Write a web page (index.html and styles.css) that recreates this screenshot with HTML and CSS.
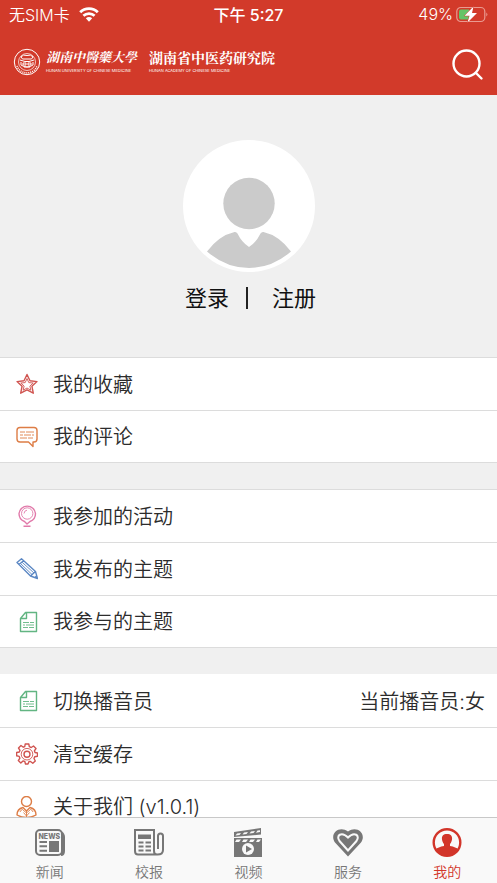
FILE: index.html
```html
<!DOCTYPE html>
<html lang="zh-CN">
<head>
<meta charset="utf-8">
<meta name="viewport" content="width=device-width, initial-scale=1">
<title>我的</title>
<link rel="stylesheet" href="styles.css">
</head>
<body>
<svg class="defs" aria-hidden="true">
  <symbol id="doc" viewBox="0 0 22 22">
    <path d="M9.500 1.500H20.500V20.500H4.500V7.500Z M10.500 1.500V7.500H4.500"/>
    <path class="thin" d="M7 11.500H13 M14 11.500H18 M7 14H9 M10 14H18 M7 16.500H12 M13 16.500H18"/>
  </symbol>
</svg>
<header class="header">
  <div class="status">
    <div class="carrier"><span>无SIM卡</span>
      <svg class="wifi" viewBox="0 0 20 15"><path d="M1.200 5.300C6 .4 14 .4 18.800 5.300" stroke-width="2.800"/><path d="M4.400 8.800C7.500 5.800 12.500 5.800 15.600 8.800" stroke-width="2.700"/><path class="dot" d="M6.800 11.300Q10 8.800 13.200 11.300L10 14.700Z"/></svg>
    </div>
    <time class="time">下午 5:27</time>
    <div class="power"><span>49%</span>
      <svg class="battery" viewBox="0 0 32 17"><rect class="shell" x=".8" y="1.500" width="28" height="14" rx="4"/><path class="charge" d="M5 3.500H13V13.500H5Q3 13.500 3 11.500V5.500Q3 3.500 5 3.500Z"/><path class="nub" d="M30.300 6.500Q32.500 8.500 30.300 10.500Z"/><path class="bolt" d="M17.500 .5L8.500 9.800H13.500L11.500 16.500L21 7H16Z"/></svg>
    </div>
  </div>
  <div class="brandbar">
    <div class="brand">
      <svg class="seal" viewBox="0 0 28 28"><circle cx="14" cy="14" r="12.700"/><circle cx="14" cy="14" r="8.500" stroke-width=".7"/><path d="M8 9Q10 6 14 7.500Q18 6 20 9L18.500 11H9.500Z M7 12L12 13.500H16L21 12 M8 14V17Q14 21 20 17V14 M10 15H13V17H10Z M15 15H18V17H15Z M11 19H17"/><path class="ring" d="M4 18A10.700 10.700 0 0 0 24 18"/></svg>
      <div class="name"><span class="script">湖南中醫藥大學</span><span class="latin">HUNAN UNIVERSITY OF CHINESE MEDICINE</span></div>
      <div class="name"><span class="serif">湖南省中医药研究院</span><span class="latin">HUNAN ACADEMY OF CHINESE MEDICINE</span></div>
    </div>
    <button class="search" type="button" aria-label="搜索"><svg viewBox="0 0 32 32"><circle cx="14.500" cy="14.500" r="13"/><path d="M24 24L29.500 29.500"/></svg></button>
  </div>
</header>
<main class="content">
  <section class="profile">
    <svg class="avatar" viewBox="0 0 132 132"><circle class="disc" cx="66" cy="66" r="66"/><circle cx="66" cy="63.500" r="25.700"/><path d="M24 111.500Q36 95.500 51.500 92Q53.500 91.700 54.500 93.500Q58.500 102 66 107Q73.500 102 77.500 93.500Q78.500 91.700 80.500 92Q96 95.500 108 111.500Q89 128 66 128Q43 128 24 111.500Z"/></svg>
    <div class="account"><a href="#login">登录</a><span class="bar"></span><a href="#register">注册</a></div>
  </section>
  <nav class="group">
    <a class="row" href="#favorites"><svg class="icon red" viewBox="0 0 22 22"><path d="M11 1.500L14 7.800L21 8.600L15.900 13.200L17.300 20.200L11 16.800L4.700 20.200L6.100 13.200L1 8.600L8 7.800Z"/><path class="thin" d="M11 5.500L12.800 9.600L17.200 10L13.900 13L14.800 17.200L11 15L7.200 17.200L8.100 13L4.800 10L9.200 9.600Z"/></svg><span>我的收藏</span></a>
    <a class="row" href="#comments"><svg class="icon orange" viewBox="0 0 22 22"><path d="M4 1.500H18Q21 1.500 21 4.500V13Q21 16 18 16H17V20.500L12.500 16H4Q1 16 1 13V4.500Q1 1.500 4 1.500Z"/><path class="thin" d="M4 6H9 M10 6H18 M4 9H7 M8 9H15 M16 9H18 M4 12H11 M12 12H17"/></svg><span>我的评论</span></a>
  </nav>
  <nav class="group">
    <a class="row" href="#activities"><svg class="icon pink" viewBox="0 0 22 22"><path d="M11 19L8.500 16.500Q3 14.500 3 8.500A8.300 8.300 0 0 1 19.500 8.500Q19.500 14.500 14 16.500Z M7.500 21.300H14.500"/><circle class="thin" cx="11.200" cy="8.500" r="5.700"/><path class="thin" d="M8 8.500Q8.300 5.500 11 5.200"/></svg><span>我参加的活动</span></a>
    <a class="row" href="#topics"><svg class="icon blue" viewBox="0 0 22 22"><path d="M1 4.500L5.500 .8L19.500 13.500L21.500 20.500L14.500 18Z M14.500 18L19.500 13.500 M3 6.500L7.500 2.800 M18.500 20L21 17.500"/><path class="thin" d="M4.500 5.500L16 16.500 M6 4.200L18 15"/></svg><span>我发布的主题</span></a>
    <a class="row" href="#joined"><svg class="icon green"><use href="#doc"/></svg><span>我参与的主题</span></a>
  </nav>
  <nav class="group plain">
    <a class="row" href="#voice"><svg class="icon green"><use href="#doc"/></svg><span>切换播音员</span><span class="value">当前播音员:女</span></a>
    <a class="row" href="#cache"><svg class="icon red" viewBox="0 0 22 22"><path d="M9.200 1H12.800L13.300 3.700L15.200 4.500L17.500 3L20 5.500L18.400 7.800L19 9.500L21.500 10V13.300L18.700 13.700L18 15.500L19.300 18L16.800 20.300L14.500 18.500H13L12 21H9.500L8.800 18.500L7 17.900L4.800 20L2.300 17.600L3.900 15.200L3.200 13.400L.6 12.800V9.500L3.300 9L4 7.300L2.500 5L5 2.500L7.300 4.200L8.800 3.500Z"/><circle class="thin" cx="11" cy="11.200" r="5.800"/><circle cx="11" cy="11.200" r="3"/></svg><span>清空缓存</span></a>
    <a class="row" href="#about"><svg class="icon orange" viewBox="0 0 22 22"><circle cx="10.500" cy="5.500" r="5"/><path d="M7 11.500Q1 13 1 19Q10.500 24 20 19Q20 13 14 11.500L10.500 15Z"/><path class="thin" d="M4 16Q4.500 14 6.500 13.500L10.500 17L14.500 13.500Q16.500 14 17 16 M10.500 15V21 M7.500 16.500L10.500 20L13.500 16.500"/></svg><span>关于我们 (v1.0.1)</span></a>
  </nav>
</main>
<nav class="tabs">
  <a class="tab" href="#news"><svg viewBox="0 0 32 32"><path class="fill" d="M27 4Q31 6 31 10V24Q31 29 27 29Z"/><rect class="paper" x="2" y="3" width="26" height="25" rx="4"/><text x="4.500" y="11.500">NEWS</text><path d="M5.500 15H13 M5.500 19.300H13 M5.500 23.700H13"/><path class="fill" d="M15 14H25V25H15Z"/></svg><span>新闻</span></a>
  <a class="tab" href="#paper"><svg viewBox="0 0 32 32"><path d="M2 3H21V24Q21 27.500 24 27.500H5Q2 27.500 2 24Z M21 27.500H24.500Q30 27.500 30 23V9Q30 6.500 27.500 6.500Q25 6.500 25 9V22"/><path class="fill" d="M5 7.500H18V12H5Z"/><path d="M5.500 15.500H10.500 M12.500 15.500H18 M5.500 19.500H10.500 M12.500 19.500H18 M5.500 23.500H10.500 M12.500 23.500H18"/></svg><span>校报</span></a>
  <a class="tab" href="#video"><svg viewBox="0 0 32 32"><path class="fill" d="M2 5L29 1V7.500L2 10Z M2 11H30V30H2Z"/><path class="cut" d="M5 6.500L9 5.900L7.500 8L3.500 8.500Z M12 5.500L16 4.900L14.500 7L10.500 7.500Z M19 4.500L23 3.900L21.500 6L17.500 6.500Z M25.500 3.500L28 3.200V5L24 5.700Z M4.500 12.500H9L7 15H3Z M11.500 12.500H16L14 15H10Z M18.500 12.500H23L21 15H17Z M25.500 12.500H29L27 15H24Z"/><circle class="cut" cx="16" cy="22" r="6"/><path class="fill" d="M14 18.500L20 22L14 25.500Z"/></svg><span>视频</span></a>
  <a class="tab" href="#service"><svg viewBox="0 0 32 32"><path class="fill" d="M16 29.500L3 15.500C-3 7 7-2 16 4.500C25-2 35 7 29 15.500Z"/><path class="heart" d="M16 23.500L7.500 14C3.500 8.500 9.500 4 16 10.500C22.500 4 28.500 8.500 24.500 14Z"/></svg><span>服务</span></a>
  <a class="tab active" href="#me"><svg viewBox="0 0 32 32"><circle cx="16" cy="15.500" r="13.300"/><path class="fill" d="M16 7C9 7 10.500 14 13 17V19Q7 20 4.500 22.500A14 14 0 0 0 27.500 22.500Q25 20 19 19V17C21.500 14 23 7 16 7Z"/></svg><span>我的</span></a>
</nav>
</body>
</html>
```

FILE: styles.css
```css
* { box-sizing: border-box; }
body {
  margin: 0;
  height: 100vh;
  display: flex;
  flex-direction: column;
  overflow: hidden;
  background: #f0f0f0;
  color: #2c2c2c;
  font-family: Inter, "Noto Sans CJK SC", sans-serif;
}
a { color: inherit; text-decoration: none; }
svg { display: block; fill: none; stroke: currentColor; flex: none; }
.defs { position: absolute; width: 0; height: 0; }
.header { flex: none; background: #d23a2a; color: #fff; }
.status {
  display: grid;
  grid-template-columns: 1fr auto 1fr;
  align-items: center;
  height: 28px;
  padding: 0 9px;
  font-size: 16px;
  font-weight: 350;
}
.carrier, .power { display: flex; align-items: center; gap: 9px; }
.power { justify-content: flex-end; gap: 3px; }
.wifi { width: 20px; height: 15px; }
.wifi .dot { fill: #fff; stroke: none; }
.time { font-weight: 500; }
.battery { width: 32px; height: 17px; stroke: none; }
.shell { stroke: #ea9a90; stroke-width: 1.200; }
.charge { fill: #65c466; }
.nub { fill: #ea9a90; }
.bolt { fill: #fff; stroke: #d23a2a; stroke-width: 1; paint-order: stroke; }
.brandbar {
  display: flex;
  align-items: center;
  justify-content: space-between;
  height: 67px;
  padding: 0 13px;
}
.brand { display: flex; align-items: center; gap: 5px; }
.seal { width: 28px; height: 28px; }
.seal .ring { stroke-width: 1.500; stroke-dasharray: 1 1; }
.name { display: flex; flex-direction: column; gap: 2px; margin-right: 7px; padding-bottom: 2px; white-space: nowrap; }
.script, .serif { font-family: "Noto Serif CJK SC", "Noto Sans CJK SC", serif; font-size: 14px; line-height: 18px; font-weight: 700; }
.script { font-size: 13px; font-style: italic; }
.latin { font-family: Inter, sans-serif; font-size: 4px; line-height: 6px; }
.search { width: 32px; height: 32px; margin-top: 6px; padding: 0; border: 0; background: none; color: #fff; }
.search svg { width: 32px; height: 32px; stroke-width: 2.400; stroke-linecap: round; }
.content { flex: 1; min-height: 0; overflow: hidden; display: flex; flex-direction: column; gap: 26px; }
.profile {
  flex: none;
  display: flex;
  flex-direction: column;
  align-items: center;
  gap: 10px;
  height: 262px;
  margin-bottom: -26px;
  padding-top: 45px;
}
.avatar { width: 132px; height: 132px; fill: #cbcbcb; stroke: none; }
.disc { fill: #fff; }
.account { display: flex; align-items: center; padding-left: 4px; color: #111; font-size: 22px; line-height: 32px; }
.bar { width: 2px; height: 22px; margin: 0 24px 0 17px; background: #222; }
.group { flex: none; background: #fff; border-bottom: 1px solid #dcdcdc; }
.row {
  display: flex;
  align-items: center;
  gap: 15px;
  height: 53px;
  padding: 0 12px 0 16px;
  border-top: 1px solid #dcdcdc;
  font-size: 20px;
  font-weight: 350;
}
.row span { padding-bottom: 2px; }
.row:last-child { height: 52px; }
.plain .row:first-child { border-top-color: transparent; }
.icon { width: 22px; height: 22px; stroke-width: 1.400; stroke-linejoin: round; }
.thin { stroke-width: .9; }
.red { color: #d05450; }
.orange { color: #dd7d46; }
.pink { color: #e17aaa; }
.blue { color: #5c88c4; }
.green { color: #62b582; }
.value { margin-left: auto; }
.tabs {
  flex: none;
  display: grid;
  grid-template-columns: repeat(5, 1fr);
  height: 66px;
  border-top: 1px solid #c8c8c8;
  background: #f9f9f9;
  color: #777;
}
.tab { display: flex; flex-direction: column; align-items: center; gap: 1px; padding-top: 9px; font-size: 14px; line-height: 24px; font-weight: 350; }
.tab svg { width: 32px; height: 32px; stroke-width: 2; }
.tab .fill { fill: currentColor; stroke: none; }
.tab .cut { fill: #f9f9f9; stroke: none; }
.tab .paper { fill: #f9f9f9; }
.tab .heart { stroke: #f9f9f9; }
.tab text { fill: currentColor; stroke: none; font: 800 7px Inter, sans-serif; }
.active { color: #d2352a; }
.active svg { stroke-width: 2.400; }
```
